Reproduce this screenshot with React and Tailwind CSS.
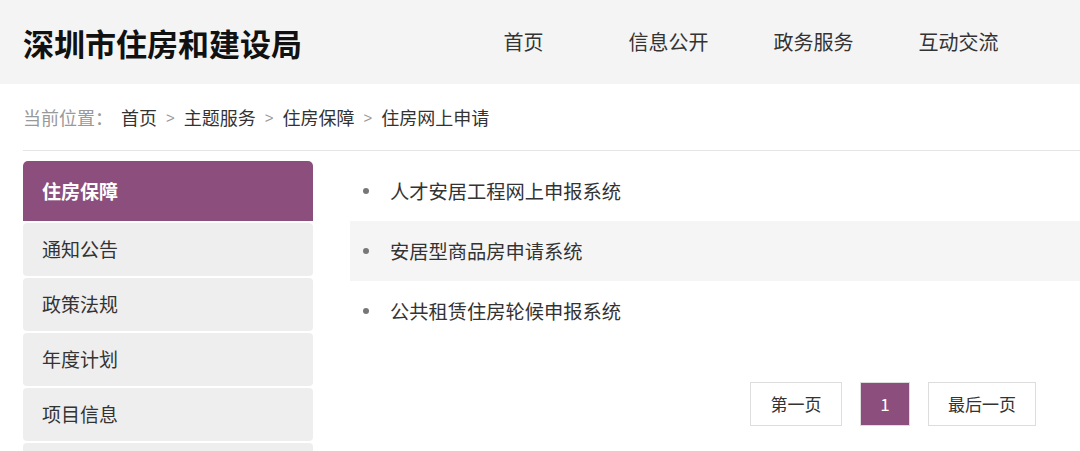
const NAV = ["首页", "信息公开", "政务服务", "互动交流"];
const CRUMBS = ["首页", "主题服务", "住房保障", "住房网上申请"];
const SIDE = ["通知公告", "政策法规", "年度计划", "项目信息", ""];
const LINKS = ["人才安居工程网上申报系统", "安居型商品房申请系统", "公共租赁住房轮候申报系统"];

const font = { fontFamily: '"Microsoft YaHei", "Noto Sans CJK SC", "Noto Sans", sans-serif' };

export default function App() {
  return (
    <div className="h-[451px] w-[1080px] overflow-hidden bg-white text-[#333]" style={font}>
      <header className="flex h-[84px] items-center bg-[#f4f4f4] pl-[23px]">
        <h1 className="w-[428px] text-[31px] font-bold leading-none text-[#111]">深圳市住房和建设局</h1>
        <nav className="flex">
          {NAV.map((item) => (
            <a key={item} className="w-[145px] text-center text-[20px] leading-none text-[#333]">
              {item}
            </a>
          ))}
        </nav>
      </header>

      <div className="pl-[23px]">
        <div className="flex h-[67px] items-center border-b border-[#e5e5e5] text-[18px] leading-none">
          <span className="mr-[8px] text-[#999]">当前位置：</span>
          {CRUMBS.map((c, i) => (
            <span key={c} className="flex items-center">
              {i > 0 ? <span className="mx-[9px] text-[15px] text-[#999]" style={{ fontFamily: '"Liberation Sans", sans-serif' }}>&gt;</span> : null}
              <span>{c}</span>
            </span>
          ))}
        </div>

        <div className="mt-[10px] flex">
          <aside className="w-[290px] shrink-0">
            <div className="flex h-[60px] items-center rounded-t-[5px] bg-[#8c4e7c] pl-[19px] text-[19px] font-bold text-white">
              住房保障
            </div>
            {SIDE.map((s, i) => (
              <div key={i} className="mt-[2px] flex h-[53px] items-center rounded-[4px] bg-[#eeeeee] pl-[19px] text-[19px] text-[#333]">
                {s}
              </div>
            ))}
          </aside>

          <main className="ml-[37px] flex-1">
            <ul>
              {LINKS.map((l, i) => (
                <li key={l} className={"flex h-[60px] items-center pl-[13px] " + (i === 1 ? "bg-[#f5f5f5]" : "")}>
                  <span className="h-[6px] w-[6px] rounded-full bg-[#777]" />
                  <span className="ml-[21px] text-[19.25px] text-[#333]">{l}</span>
                </li>
              ))}
            </ul>

            <div className="mt-[41px] flex justify-end gap-[18px] pr-[44px]">
              <a className="flex h-[44px] w-[92px] items-center justify-center border border-[#dddddd] text-[17px] text-[#333]">第一页</a>
              <a className="flex h-[44px] w-[50px] items-center justify-center border border-[#dddddd] bg-[#8c4e7c] text-[17px] text-white">1</a>
              <a className="flex h-[44px] w-[108px] items-center justify-center border border-[#dddddd] text-[17px] text-[#333]">最后一页</a>
            </div>
          </main>
        </div>
      </div>
    </div>
  );
}
